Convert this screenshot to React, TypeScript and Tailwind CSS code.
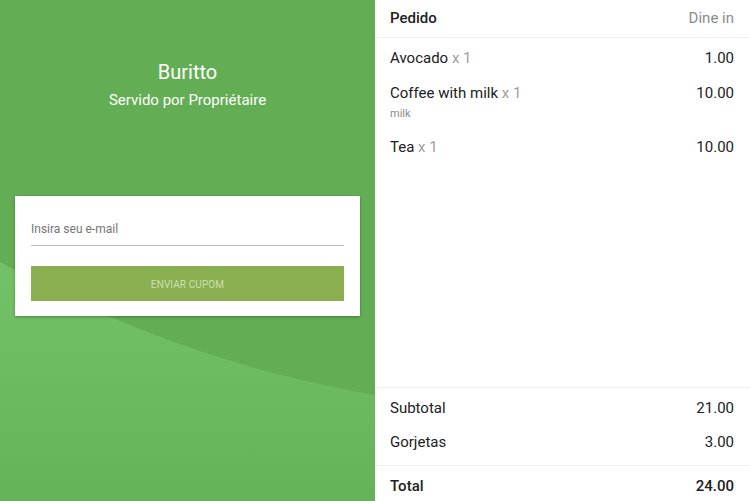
import React from 'react';

interface OrderItem {
  name: string;
  qty: number;
  price: string;
  note?: string;
}

const items: OrderItem[] = [
  { name: 'Avocado', qty: 1, price: '1.00' },
  { name: 'Coffee with milk', qty: 1, price: '10.00', note: 'milk' },
  { name: 'Tea', qty: 1, price: '10.00' },
];

const CouponPanel: React.FC = () => {
  return (
    <div className="relative w-[375px] h-full bg-[#63ae55] overflow-hidden">
      {/* background wave */}
      <svg className="absolute inset-0" width="375" height="501" viewBox="0 0 375 501">
        <defs>
          <linearGradient id="wave" x1="0" y1="0" x2="0" y2="1">
            <stop offset="0" stopColor="#74c268" />
            <stop offset="1" stopColor="#66b259" />
          </linearGradient>
        </defs>
        <path d="M0 262 C 100 318, 220 368, 375 395 L375 501 L0 501 Z" fill="url(#wave)" />
      </svg>

      <div className="relative flex flex-col items-center pt-[58px] text-white">
        <div className="text-[20px] leading-[28px]">Buritto</div>
        <div className="text-[15px] leading-[20px] mt-[4px]">Servido por Propriétaire</div>
      </div>

      <div className="relative mx-[15px] mt-[86px] bg-white shadow-[0_1px_3px_rgba(0,0,0,0.3)] px-4 pt-[25px] pb-[15px]">
        <div className="text-[12px] leading-[16px] text-[#757575] pb-[8px] border-b border-[#bdbdbd]">
          Insira seu e-mail
        </div>
        <button className="mt-[20px] w-full h-[35px] pt-[2px] bg-[#8ab052] text-[#cddfae] text-[10px] tracking-[0.1px] flex items-center justify-center">
          ENVIAR CUPOM
        </button>
      </div>
    </div>
  );
};

const OrderPanel: React.FC = () => {
  return (
    <div className="w-[375px] h-full bg-white flex flex-col text-[#212121]">
      <div className="h-[38px] shrink-0 flex items-center justify-between pl-[15px] pr-4 border-b border-[#eeeeee]">
        <span className="text-[15px] font-medium">Pedido</span>
        <span className="text-[15px] text-[#8a8a8a]">Dine in</span>
      </div>

      <div className="flex-1 pl-[15px] pr-4 pt-[10px]">
        {items.map((item) => (
          <div key={item.name} className="flex justify-between items-start mb-[15px]">
            <div>
              <div className="text-[15px] leading-[20px]">
                {item.name}
                <span className="text-[#9e9e9e]"> x {item.qty}</span>
              </div>
              {item.note && <div className="text-[11px] leading-[16px] text-[#8a8a8a] mt-[3px]">{item.note}</div>}
            </div>
            <div className="text-[15px] leading-[20px]">{item.price}</div>
          </div>
        ))}
      </div>

      <div className="shrink-0 border-t border-[#eeeeee] pl-[15px] pr-4 pt-[10px] pb-[13px]">
        <div className="flex justify-between text-[15px] leading-[20px]">
          <span>Subtotal</span>
          <span>21.00</span>
        </div>
        <div className="flex justify-between text-[15px] leading-[20px] mt-[14px]">
          <span>Gorjetas</span>
          <span>3.00</span>
        </div>
      </div>

      <div className="shrink-0 border-t border-[#eeeeee] pl-[15px] pr-4 pt-[10px] pb-[5px] flex justify-between text-[15px] leading-[20px] font-medium">
        <span>Total</span>
        <span>24.00</span>
      </div>
    </div>
  );
};

export default function App() {
  return (
    <div className="w-[750px] h-[501px] flex overflow-hidden font-['Roboto',sans-serif]">
      <CouponPanel />
      <OrderPanel />
    </div>
  );
}
